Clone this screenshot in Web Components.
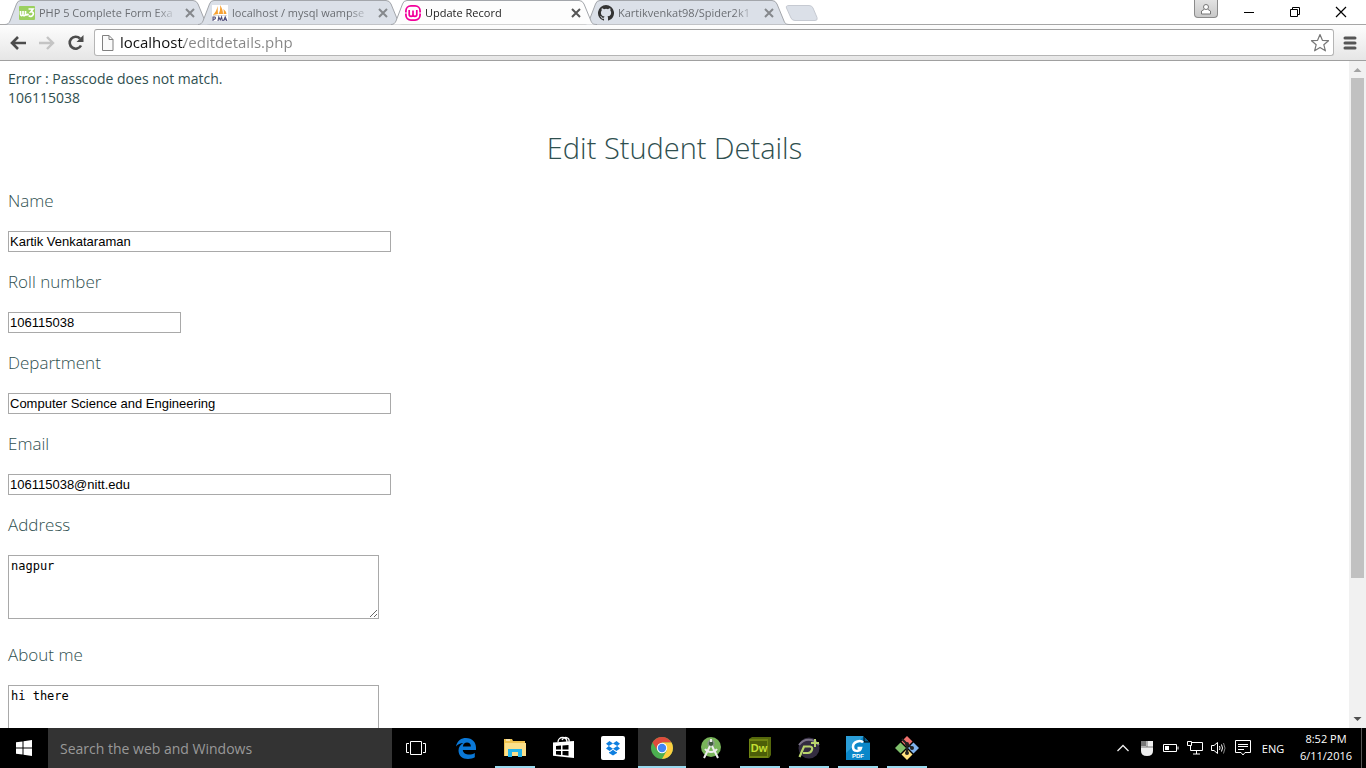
<!DOCTYPE html>
<html lang="en">
<head>
<meta charset="utf-8">
<title>Update Record</title>
<style>
html, body { height: 100%; margin: 0; }
body { font-family: "Open Sans", "Noto Sans", sans-serif; overflow: hidden; }
</style>
</head>
<body>
<desktop-screen></desktop-screen>

<template id="t-screen">
<style>
:host { display: flex; flex-direction: column; height: 100vh; background: #fff; }
student-page { flex: 1; min-height: 0; }
</style>
<browser-tabs></browser-tabs>
<browser-toolbar></browser-toolbar>
<student-page></student-page>
<task-bar></task-bar>
</template>

<template id="t-tabs">
<style>
:host { display: flex; height: 24px; padding-left: 5px; background: #fff; }
.strip { display: flex; flex: 1; min-width: 0; }
browser-tab { margin-right: -13px; }
.new { width: 34px; height: 24px; padding: 0; border: 0; background: none; margin-left: 7px; }
.new svg { display: block; }
.spacer { flex: 1; }
.user { width: 24px; height: 18px; padding: 0; border: 1px solid #8b8b8b; border-top: 0; border-radius: 0 0 4px 4px; background: linear-gradient(#e2e2e2, #c9c9c9); }
.user svg { display: block; margin: auto; }
.win { width: 46px; height: 24px; padding: 0; border: 0; background: none; }
.win svg { display: block; margin: auto; }
.wins { display: flex; margin-left: 8px; margin-right: 2px; }
</style>
<div class="strip" role="tablist">
<browser-tab label="PHP 5 Complete Form Exa"><svg width="16" height="16" viewBox="0 0 16 16"><rect y="1" width="16" height="14" rx="1" fill="#9bd05f"/><path d="M1.500 6v3c0 1.500 1.300 2 2.200 1C4.500 11 6.500 11 6.500 9V6M4 6v3.500M6.500 9.500c1 .8 2 .6 3-.8M9.500 4H14L11.800 6.800C14 6.500 14.700 8 14.200 9.500 13.500 11.600 11 12 9.700 10.500" fill="none" stroke="#fff" stroke-width="1.700"/></svg></browser-tab>
<browser-tab label="localhost / mysql wampse"><svg width="16" height="16" viewBox="0 0 16 16"><path d="M0 0h16v16H0z" fill="#fff"/><path d="M1 10C3 8 5 5 5.500 1L6 9zM6.500 9C8 6 8.500 4 8 0c2 3 3 6 3 9zM11.500 9c.5-2 .4-3-.2-5 2 1.500 3 3 3.200 5z" fill="#f7a233"/><path d="M1 10.500h14" stroke="#ddd"/><path d="M1 16v-4h1.800q1.300 1.100 0 2.200H1M6 16l.8-4 1.400 3 1.400-3 .8 4M11.500 16l1.700-4 1.700 4M12.200 14.700h2" fill="none" stroke="#4b4b78" stroke-width="1.100"/></svg></browser-tab>
<browser-tab label="Update Record" active><svg width="16" height="16" viewBox="0 0 16 16"><rect x=".9" y=".9" width="14.200" height="14.200" rx="5" fill="#fff" stroke="#f2009b" stroke-width="1.800"/><path d="M0 8h3M13 8h3" stroke="#fff" stroke-width="1"/><path d="M4.200 5v4.500c0 2.400 3.800 2.400 3.800 0V5.500v4c0 2.400 3.800 2.400 3.800 0V5" fill="none" stroke="#f2009b" stroke-width="1.700"/></svg></browser-tab>
<browser-tab label="Kartikvenkat98/Spider2k1"><svg width="16" height="16" viewBox="0 0 16 16"><path fill="#333" d="M8 0a8 8 0 0 0-2.530 15.590c.4.070.55-.17.55-.38v-1.490c-2.230.48-2.700-.95-2.700-.95-.36-.92-.89-1.170-.89-1.170-.73-.5.050-.49.050-.49.810.06 1.230.83 1.230.83.720 1.230 1.880.87 2.340.67.070-.52.280-.87.510-1.070-1.780-.2-3.640-.89-3.640-3.950 0-.87.310-1.590.82-2.150-.08-.2-.36-1.020.08-2.120 0 0 .67-.21 2.200.82a7.600 7.600 0 0 1 4 0c1.530-1.040 2.200-.82 2.200-.82.440 1.100.160 1.920.080 2.120.510.56.820 1.270.820 2.150 0 3.070-1.870 3.750-3.650 3.950.29.250.540.730.540 1.480v2.190c0 .21.150.46.550.38A8 8 0 0 0 8 0z"/></svg></browser-tab>
<button class="new" aria-label="New tab"><svg width="34" height="24" viewBox="0 0 34 24"><path d="M5 5.500H25Q28 5.500 29 8L33 17.500Q34 20.500 31 20.500H11Q8 20.500 7 18L2.500 8Q1.500 5.500 5 5.500z" fill="#dbe0e8" stroke="#c6cad2"/></svg></button>
</div>
<button class="user" aria-label="Profile"><svg width="14" height="14" viewBox="0 0 14 14"><path d="M7 2.500a2.300 2.300 0 1 1 0 5 2.300 2.300 0 0 1 0-5M5.300 7.300 2.500 9v3h9V9L8.700 7.300" fill="#fff" stroke="#777"/></svg></button>
<div class="wins">
<button class="win" aria-label="Minimize"><svg width="12" height="12" viewBox="0 0 12 12"><path d="M1 6.500h10" stroke="#000"/></svg></button>
<button class="win" aria-label="Restore"><svg width="12" height="12" viewBox="0 0 12 12"><path d="M1.500 3.500h7v7h-7zM3.500 3V1.500h7v7H9" fill="none" stroke="#000"/></svg></button>
<button class="win" aria-label="Close"><svg width="12" height="12" viewBox="0 0 12 12"><path d="M1 1l10 10M11 1 1 11" stroke="#000" stroke-width="1.200"/></svg></button>
</div>
</template>

<template id="t-tab">
<style>
:host { display: grid; width: 206px; height: 25px; position: relative; z-index: 0; }
:host([active]) { z-index: 2; }
svg.shape, .row { grid-area: 1 / 1; }
.shape path { fill: #dbe0e8; stroke: #a3a6ab; }
:host([active]) .shape path { fill: #fdfdfd; }
.row { display: flex; align-items: center; padding: 2px 16px 2px 14px; height: 21px; min-width: 0; }
::slotted(svg) { flex: none; }
button { border: 0; padding: 0; background: none; font: inherit; }
.title { flex: 1; min-width: 0; white-space: nowrap; text-align: left; margin: 0 7px 0 4px; font-size: 11px; line-height: 20px; color: #6b6e73;
 -webkit-mask-image: linear-gradient(90deg, #000 116px, transparent 100%); mask-image: linear-gradient(90deg, #000 116px, transparent 100%); }
:host([active]) .title { color: #222; }
.close { width: 10px; height: 10px; flex: none; }
.close svg { display: block; }
.close path { stroke: #85888c; stroke-width: 2; }
:host([active]) .close path { stroke: #555; }
</style>
<svg class="shape" width="206" height="25" viewBox="0 0 206 25" aria-hidden="true"><path d="M0 24.500C3 24.500 4 23 5 21L11.500 4Q12.500.5 16 .5H188Q191.500.5 193 4L200 21C201 23.500 202 24.500 206 24.500"/></svg>
<div class="row"><slot></slot><button class="title" role="tab"></button><button class="close" aria-label="Close tab"><svg width="10" height="10" viewBox="0 0 10 10"><path d="M1 1l8 8M9 1 1 9"/></svg></button></div>
</template>

<template id="t-toolbar">
<style>
:host { display: flex; align-items: center; box-sizing: border-box; height: 37px; padding: 0 9px 0 8px; border-top: 1px solid #a6a6a6; border-bottom: 1px solid #a0a0a0; background: linear-gradient(#fdfdfd, #e6e6e6); }
button { display: block; flex: none; width: 20px; height: 20px; padding: 0; border: 0; background: none; }
button svg { display: block; margin: auto; }
.nav { display: flex; gap: 9px; }
.omni { display: flex; flex: 1; align-items: center; box-sizing: border-box; height: 27px; margin: 0 9px 0 8px; padding: 0 3px 0 6px; border: 1px solid #b5b5b5; border-top-color: #a0a0a0; border-radius: 3px; background: #fff; }
input { flex: 1; min-width: 0; margin-left: 5px; padding: 0 0 2px; border: 0; outline: 0; font: 15px/22px "Open Sans", sans-serif; color: transparent;
 background: linear-gradient(90deg, #111 64px, #858585 64px); -webkit-background-clip: text; background-clip: text; }
.menu { width: 14px; }
</style>
<div class="nav">
<button aria-label="Back"><svg width="18" height="16" viewBox="0 0 18 16"><path d="M17 8H4M9 2 3 8l6 6" fill="none" stroke="#4c4c4c" stroke-width="2.600"/></svg></button>
<button aria-label="Forward"><svg width="18" height="16" viewBox="0 0 18 16"><path d="M1 8h13M9 2l6 6-6 6" fill="none" stroke="#c4c4c4" stroke-width="2.400"/></svg></button>
<button aria-label="Reload"><svg width="18" height="18" viewBox="0 0 18 18"><path d="M14 11.500A6 6 0 1 1 13 4.500" fill="none" stroke="#4c4c4c" stroke-width="2.600"/><path d="M16.500 1v7h-7z" fill="#4c4c4c"/></svg></button>
</div>
<div class="omni">
<svg width="14" height="16" viewBox="0 0 14 16"><path d="M1.500.5h6.500l4 4v11H1.500zM8 .5v4h4" fill="#fafafa" stroke="#808080"/></svg>
<input aria-label="Address" value="localhost/editdetails.php">
<button aria-label="Bookmark"><svg width="20" height="20" viewBox="0 0 20 20"><path d="M10 1.500 12.400 7.300 18.500 7.700 13.800 11.700 15.400 17.800 10 14.400 4.600 17.800 6.200 11.700 1.500 7.700 7.600 7.300z" fill="none" stroke="#777" stroke-width="1.200" stroke-linejoin="round"/></svg></button>
</div>
<button class="menu" aria-label="Menu"><svg width="14" height="14" viewBox="0 0 14 14"><path d="M2 2h10M2 7h10M2 12h10" stroke="#555" stroke-width="3" stroke-linecap="round"/></svg></button>
</template>

<template id="t-page">
<style>
:host { display: flex; overflow: hidden; background: #fff; color: #2f4f4f; }
main { flex: 1; min-width: 0; padding: 8px; font-size: 14px; line-height: 19px; }
p { margin: 0; }
h1 { margin: 21px 0 22px; text-align: center; font-size: 29px; line-height: 39px; font-weight: 300; }
form { display: flex; flex-direction: column; gap: 18px; }
.bar { display: flex; flex-direction: column; align-items: center; width: 17px; background: #f1f1f1; }
.bar svg { flex: none; }
.track { flex: 1; width: 13px; }
.thumb { height: 79%; background: #c1c1c1; }
</style>
<main>
<p>Error : Passcode does not match.</p>
<p>106115038</p>
<h1>Edit Student Details</h1>
<form>
<form-field label="Name" value="Kartik Venkataraman"></form-field>
<form-field label="Roll number" value="106115038" short></form-field>
<form-field label="Department" value="Computer Science and Engineering"></form-field>
<form-field label="Email" value="106115038@nitt.edu"></form-field>
<form-field label="Address" value="nagpur" multiline></form-field>
<form-field label="About me" value="hi there" multiline></form-field>
</form>
</main>
<div class="bar" aria-hidden="true"><svg width="17" height="17" viewBox="0 0 17 17"><path d="M4.500 11h8l-4-4z" fill="#a3a3a3"/></svg><div class="track"><div class="thumb"></div></div><svg width="17" height="17" viewBox="0 0 17 17"><path d="M4.500 6h8l-4 4z" fill="#505050"/></svg></div>
</template>

<template id="t-field">
<style>
:host { display: block; }
:host([multiline]) { padding-bottom: 6px; }
label { display: block; margin-bottom: 19px; font-size: 17px; line-height: 23px; font-weight: 300; }
input, textarea { display: block; box-sizing: border-box; margin: 0; border: 1px solid #a9a9a9; border-radius: 0; background: #fff; color: #000; outline: 0; }
input { width: 383px; height: 21px; padding: 1px; font: 13px "Liberation Sans", sans-serif; }
:host([short]) input { width: 173px; }
textarea { width: 371px; height: 64px; padding: 2px; font: 12px/16px "DejaVu Sans Mono", monospace; }
</style>
</template>

<template id="t-taskbar">
<style>
:host { display: flex; height: 40px; background: #000; color: #fff; }
button { display: flex; flex: none; align-items: center; justify-content: center; width: 48px; padding: 0; border: 0; background: none; color: inherit; font: inherit; }
input { box-sizing: border-box; width: 344px; margin: 0; padding: 0 12px; border: 0; border-radius: 0; outline: 0; background: #333; color: #fff; font: 14px "Open Sans", sans-serif; }
input::placeholder { color: #999; opacity: 1; }
.apps { display: flex; gap: 1px; flex: 1; padding-left: 2px; }
.tray { display: flex; align-items: center; }
.tray button { width: 24px; height: 40px; }
.tray .lang { width: 36px; font-size: 11px; }
.tray .clock { flex-direction: column; width: 70px; font-size: 11px; line-height: 17px; padding-bottom: 2px; }
.peek { width: 5px; height: 40px; box-sizing: border-box; border-left: 1px solid #555; }
</style>
<button aria-label="Start"><svg width="16" height="16" viewBox="0 0 16 16"><path d="M0 2.300 6.500 1.400v6.100H0zM7.500 1.200 16 0v7.500H7.500zM0 8.500h6.500v6.100L0 13.700zM7.500 8.500H16V16l-8.500-1.200z" fill="#fff"/></svg></button>
<input type="text" aria-label="Search" placeholder="Search the web and Windows">
<button aria-label="Task view"><svg width="20" height="14" viewBox="0 0 20 14"><path d="M4.500.5h11v13h-11zM3 2.500H.5v9H3M17 2.500h2.500v9H17" fill="none" stroke="#fff"/></svg></button>
<div class="apps">
<task-app label="Edge"><svg width="22" height="22" viewBox="0 0 22 22"><path d="M1 9.500C2 3.500 6.500 1 11 1c6.500 0 10 4.500 10 9.800V13H7.800c.3 3.300 3.400 4.600 6.200 4.600 2.200 0 4.200-.6 5.800-1.600v4.300C18 21.300 15.700 22 13 22 7.300 22 3.500 18.700 3.500 13.500 3.500 10 5.500 7.300 8.500 6 5.300 6 2.800 7.300 1 9.500zM7.900 9.500h8C15.900 6.800 14.300 5.500 12 5.500 9.800 5.500 8.200 7 7.900 9.500z" fill="#0a78d7"/></svg></task-app>
<task-app label="File Explorer" running><svg width="22" height="20" viewBox="0 0 22 20"><path d="M0 1h8l1 2h12v15H0z" fill="#f0c350"/><path d="M1 5h21v13H1z" fill="#fbe08b"/><path d="M2 2h4" stroke="#fff"/><path d="M4 19v-8h14v8h-4v-5H8v5z" fill="#24b5eb"/></svg></task-app>
<task-app label="Store"><svg width="22" height="24" viewBox="0 0 22 24"><path d="M0 6.500 21 5v17L0 19.800z" fill="#fff"/><path d="M5 6C5 0 14 0 14 6M9 4c2-4 8-3 7 2" fill="none" stroke="#fff" stroke-width="1.300"/><path d="M3 10l5-.4v4H3zM9.500 9.500l6-.5v4.600h-6zM3 15h5v4l-5-.5zM9.500 15h6v4.700l-6-.6z" fill="#000"/></svg></task-app>
<task-app label="Dropbox"><svg width="24" height="24" viewBox="0 0 24 24"><rect width="24" height="24" rx="2" fill="#fff"/><path d="M8.500 5 12 7.500 7.800 10 5 7.700zM15.500 5 12 7.500l4.200 2.500L19 7.700zM5 12.500 7.800 10l4.200 2.700L8.500 15zM19 12.500 16.200 10 12 12.700l3.500 2.300zM8 15.800l.7.400 3.300-2.500 3.300 2.500.7-.4v1.200L12 19.500 8 17z" fill="#0e7fe0"/></svg></task-app>
<task-app label="Chrome" running active><svg width="22" height="22" viewBox="0 0 22 22"><circle cx="11" cy="11" r="11" fill="#4caf50"/><path d="M1.500 5.500A11 11 0 0 1 20.500 5.500H11L6.500 13.500z" fill="#df4b3c"/><path d="M20.500 5.500A11 11 0 0 1 11 22L15.800 13.500 11 5.500z" fill="#fecd40"/><circle cx="11" cy="11" r="5.200" fill="#fff"/><circle cx="11" cy="11" r="4.200" fill="#4285f4"/></svg></task-app>
<task-app label="Android Studio"><svg width="22" height="24" viewBox="0 0 22 24"><circle cx="11" cy="11" r="10" fill="#78b45a"/><circle cx="11" cy="7.500" r="3" fill="#3c5a3c" stroke="#8a9a8a" stroke-width="1.500"/><path d="M11 3v3M10 10 4 22M12 10l6 12M5 13c3 4 9 4 12 0" fill="none" stroke="#eee" stroke-width="2"/></svg></task-app>
<task-app label="Dreamweaver" running><svg width="22" height="22" viewBox="0 0 22 22"><path d="M0 2 3 0h19v18l-2 3H0z" fill="#55680c"/><path d="M0 2h19v19H0z" fill="#6f8412"/><path d="M1 4h17v15H1z" fill="#4c5e08"/><text x="10" y="15" text-anchor="middle" font-family="Liberation Sans, sans-serif" font-weight="700" font-size="11" fill="#c4e034">Dw</text></svg></task-app>
<task-app label="Processing" running><svg width="24" height="24" viewBox="0 0 24 24"><circle cx="12" cy="12" r="10.500" fill="#332c40"/><path d="M2 9c5-7 14-7 20 0" fill="none" stroke="#7b7387" stroke-width="2"/><path d="M2.500 21 7 10.500h6c4 0 2 6.500-2 6.500H6" fill="none" stroke="#b9d46c" stroke-width="2.200"/><path d="M18 3v8M14 7h8" stroke="#b9d46c" stroke-width="2"/></svg></task-app>
<task-app label="PDF" running><svg width="24" height="24" viewBox="0 0 24 24"><path d="M0 0h18l6 6v18H0z" fill="#0a87c9"/><path d="M0 0h18L0 17z" fill="#2b9ed8"/><path d="M18 0v6h6z" fill="#075885" stroke="#000"/><path d="M17 6.500C15 4 7 5 7 11c0 5 7 5 8 1h-3.500" fill="none" stroke="#fff" stroke-width="2.500"/><text x="12" y="22" text-anchor="middle" font-family="Liberation Sans, sans-serif" font-weight="700" font-size="6" fill="#fff">PDF</text></svg></task-app>
<task-app label="Git" running><svg width="24" height="24" viewBox="0 0 24 24"><path d="M12 0l5.500 5.500L12 11 6.500 5.500z" fill="#ef716d"/><path d="M18.500 6.500 24 12l-5.500 5.500L13 12z" fill="#80b3ee"/><path d="M5.500 6.500 11 12l-5.500 5.500L0 12z" fill="#7fc06b"/><path d="M12 13l5.500 5.500L12 24l-5.500-5.500z" fill="#ffe17d"/><path d="M7 3l5 5v9M12 8l5 4" fill="none" stroke="#222" stroke-width="2"/><g fill="#222"><circle cx="12" cy="8" r="2"/><circle cx="12" cy="17" r="2"/><circle cx="17" cy="12" r="2"/></g></svg></task-app>
</div>
<div class="tray">
<button aria-label="Show hidden icons"><svg width="12" height="8" viewBox="0 0 12 8"><path d="M.5 7 6 1.500 11.500 7" fill="none" stroke="#eee" stroke-width="1.300"/></svg></button>
<button aria-label="Mouse"><svg width="14" height="16" viewBox="0 0 14 16"><path d="M1 1h12v10q0 5-6 5t-6-5z" fill="#eee"/><path d="M1 1h5v5H1z" fill="#777"/><path d="M7 1v6M1 7h12" stroke="#777"/></svg></button>
<button aria-label="Battery"><svg width="16" height="10" viewBox="0 0 16 10"><path d="M.5 1.500h13v7H.5zM15 3.500v3" fill="none" stroke="#fff"/><path d="M2 3h4v4H2z" fill="#fff"/></svg></button>
<button aria-label="Network"><svg width="16" height="14" viewBox="0 0 16 14"><path d="M5 1.500h10.500v8h-12V5M.5.500h4v4h-4zM9.500 9.500V13M6 13h7" fill="none" stroke="#fff"/></svg></button>
<button aria-label="Volume"><svg width="16" height="14" viewBox="0 0 16 14"><path d="M.5 4.500H3l3.500-3v11L3 9.500H.5zM8.500 5q1 2 0 4M10.500 3.500q2 3.500 0 7" fill="none" stroke="#fff"/><path d="M12.500 2q3 5 0 10.500" fill="none" stroke="#888"/></svg></button>
<button aria-label="Notifications"><svg width="16" height="16" viewBox="0 0 16 16"><path d="M.5.500h15v12H10L8 15l-2-2.500H.5zM3 4.500h10M3 6.500h10M3 9.500h6" fill="none" stroke="#fff"/></svg></button>
<button class="lang">ENG</button>
<button class="clock"><span>8:52 PM</span><span>6/11/2016</span></button>
<div class="peek"></div>
</div>
</template>

<template id="t-app">
<style>
:host { display: block; width: 48px; }
button { display: flex; align-items: center; justify-content: center; box-sizing: border-box; width: 48px; height: 40px; padding: 0; border: 0; background: none; position: relative; }
:host([active]) button { background: #2f2f2f; }
:host([running]) button::after { content: ""; position: absolute; left: 4px; right: 4px; bottom: 0; height: 2px; background: #99d9ee; }
:host([active]) button::after { left: 0; right: 0; }
</style>
<button><slot></slot></button>
</template>

<script>
function define(name, templateId, setup) {
  customElements.define(name, class extends HTMLElement {
    constructor() {
      super();
      this.attachShadow({ mode: "open" }).append(document.getElementById(templateId).content.cloneNode(true));
    }
    connectedCallback() { if (setup) setup(this, this.shadowRoot); }
  });
}
define("task-app", "t-app", (host, root) => root.querySelector("button").setAttribute("aria-label", host.getAttribute("label")));
define("browser-tab", "t-tab", (host, root) => {
  root.querySelector(".title").textContent = host.getAttribute("label");
  root.querySelector(".title").setAttribute("aria-selected", host.hasAttribute("active"));
});
define("form-field", "t-field", (host, root) => {
  const label = document.createElement("label");
  const control = document.createElement(host.hasAttribute("multiline") ? "textarea" : "input");
  label.textContent = host.getAttribute("label");
  label.htmlFor = control.id = "control";
  control.value = host.getAttribute("value");
  root.append(label, control);
});
define("browser-tabs", "t-tabs");
define("browser-toolbar", "t-toolbar");
define("student-page", "t-page");
define("task-bar", "t-taskbar");
define("desktop-screen", "t-screen");
</script>
</body>
</html>
